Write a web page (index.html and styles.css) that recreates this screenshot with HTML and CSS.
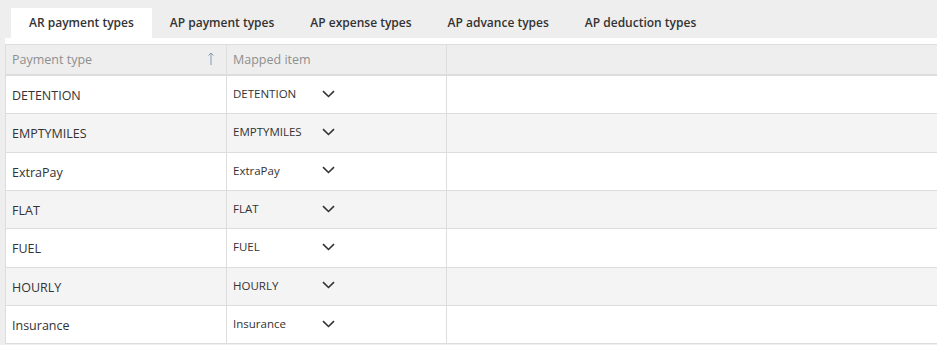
FILE: index.html
```html
<!DOCTYPE html>
<html lang="en">
<head>
    <meta charset="UTF-8">
    <title>Payment type mapping</title>
    <link rel="stylesheet" href="styles.css">
</head>
<body>

<div class="tabs">
    <div class="tab active">AR payment types</div>
    <div class="tab">AP payment types</div>
    <div class="tab">AP expense types</div>
    <div class="tab">AP advance types</div>
    <div class="tab">AP deduction types</div>
</div>

<div class="panel">
    <table class="grid">
        <thead>
            <tr>
                <th class="col-type">
                    <div class="th-inner">
                        <span>Payment type</span>
                        <svg class="sort" width="6" height="13" viewBox="0 0 6 13"><path d="M3 1V13M0.5 3.5L3 1L5.5 3.5" fill="none" stroke="#7f9bb5" stroke-width="1"/></svg>
                    </div>
                </th>
                <th class="col-item">Mapped item</th>
                <th></th>
            </tr>
        </thead>
        <tbody id="rows">
        </tbody>
    </table>
</div>

<script>
// rows of the mapping grid
var rows = ['DETENTION', 'EMPTYMILES', 'ExtraPay', 'FLAT', 'FUEL', 'HOURLY', 'Insurance'];
var chevron = '<svg width="13" height="8" viewBox="0 0 13 8"><path d="M1 1.2L6.5 6.5L12 1.2" fill="none" stroke="#333" stroke-width="1.6"/></svg>';
var tbody = document.getElementById('rows');
rows.forEach(function (name) {
    var tr = tbody.insertRow();
    tr.insertCell(0).textContent = name;
    var cell = tr.insertCell(1);
    cell.innerHTML = '<div class="select"><span>' + name + '</span>' + chevron + '</div>';
    tr.insertCell(2);
});
</script>

</body>
</html>
```

FILE: styles.css
```css
body {
    margin: 0;
    background-color: #eeeeee;
    font-family: "Open Sans", Arial, sans-serif;
    color: #333333;
}
.tabs {
    display: flex;
    height: 38px;
    padding: 8px 0 0 11px;
    box-sizing: border-box;
}
.tab {
    padding: 0 18px;
    font-size: 12px;
    font-weight: 600;
    line-height: 30px;
    color: #333333;
}
.tab.active {
    background-color: #ffffff;
}
.panel {
    margin-left: 5px;
    padding-top: 6px;
    background-color: #ffffff;
}
.grid {
    width: 100%;
    border-collapse: collapse;
    table-layout: fixed;
}
.grid th, .grid td {
    border: 1px solid #dddddd;
    padding: 0 6px;
    text-align: left;
    font-size: 12.5px;
}
.grid tr > :first-child {
    border-left: 1px solid #dddddd;
}
.grid tr > :last-child {
    border-right: none;
}
.grid th {
    height: 29px;
    background-color: #eeeeee;
    font-weight: normal;
    color: #8f8f8f;
    border-bottom: 2px solid #dddddd;
}
.col-type {
    width: 208px;
}
.col-item {
    width: 207px;
}
.th-inner {
    display: flex;
    justify-content: space-between;
    align-items: center;
}
.sort {
    margin-right: 6px;
    margin-top: -2px;
}
.grid td {
    height: 35.33px;
    padding-top: 2px;
}
.grid tbody tr:nth-child(even) td {
    background-color: #f4f4f4;
}
.select {
    display: flex;
    align-items: center;
    justify-content: space-between;
    width: 102px;
    font-size: 11.5px;
    margin-top: -4px;
}
```
